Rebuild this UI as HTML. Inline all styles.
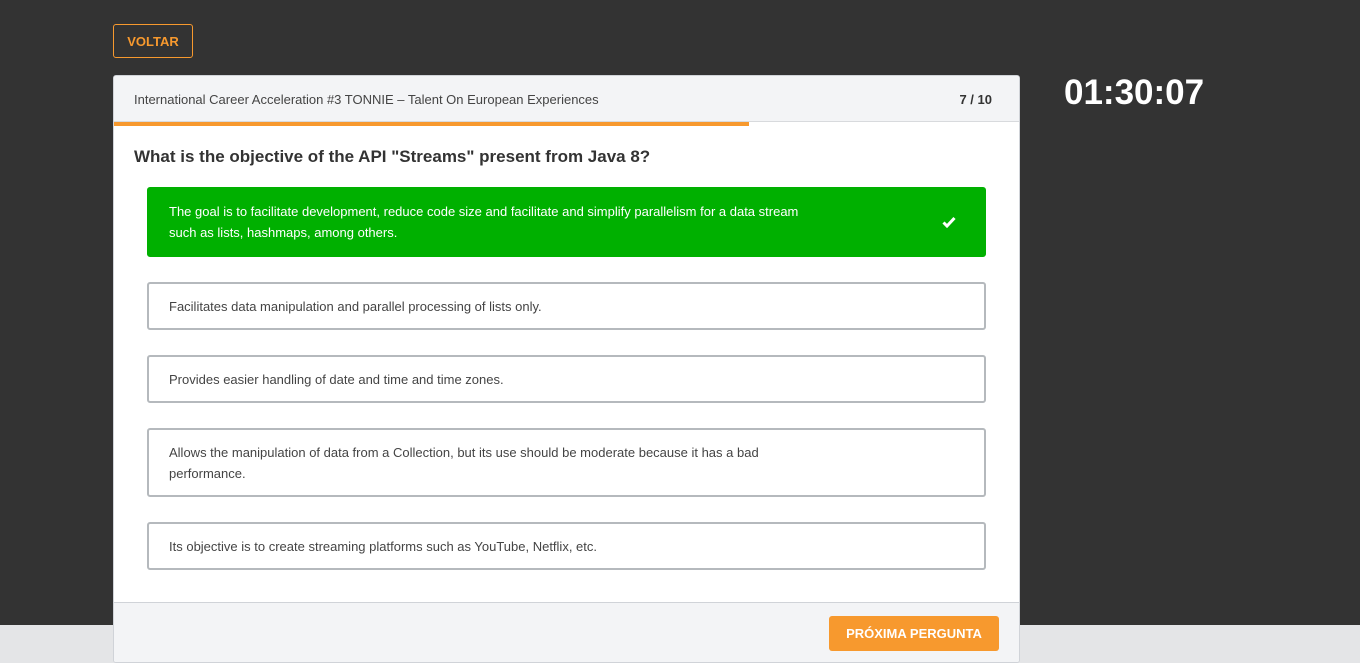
<!DOCTYPE html>
<html><head><style>
*{box-sizing:border-box;margin:0;padding:0}
body{width:1360px;height:663px;position:relative;background:#e4e5e7;font-family:"Liberation Sans",sans-serif;overflow:hidden}
.dark{position:absolute;left:0;top:0;width:1360px;height:625px;background:#333}
.voltar{position:absolute;left:113px;top:24px;width:80px;height:34px;border:1px solid #f7992e;border-radius:3px;color:#f7992e;font-weight:bold;font-size:13px;text-align:center;line-height:34px}
.timer{position:absolute;left:1064px;top:73px;color:#fff;font-weight:bold;font-size:35px}
.card{position:absolute;left:113px;top:75px;width:907px;height:588px;background:#fff;border:1px solid #d0d3d8;border-radius:3px;overflow:hidden}
.hd{height:46px;background:#f3f4f6;border-bottom:1px solid #d8dadd;position:relative;font-size:13px;color:#444}
.hd .t{position:absolute;left:20px;top:16px}
.hd .n{position:absolute;right:27px;top:16px;font-weight:bold;color:#333}
.bar{position:absolute;left:0;top:46px;width:635px;height:4px;background:#f7992e}
.q{position:absolute;left:20px;top:71px;font-size:17px;font-weight:bold;color:#333}
.opt{position:absolute;left:33px;width:839px;border:2px solid #b5b9bd;border-radius:3px;font-size:13px;color:#444;padding:0 20px;display:flex;align-items:center;line-height:21px}
.ok{background:#00b000;border-color:#00b000;color:#fff}
.ft{position:absolute;left:0;top:526px;width:907px;height:62px;background:#f3f4f6;border-top:1px solid #d0d3d8}
.btn{position:absolute;left:715px;top:13px;width:170px;height:35px;background:#f7992e;border-radius:3px;color:#fff;font-weight:bold;font-size:13px;text-align:center;line-height:35px}
</style></head><body>
<div class="dark"></div>
<div class="voltar">VOLTAR</div>
<div class="timer">01:30:07</div>
<div class="card">
<div class="hd"><span class="t">International Career Acceleration #3 TONNIE – Talent On European Experiences</span><span class="n">7 / 10</span></div>
<div class="bar"></div>
<div class="q">What is the objective of the API "Streams" present from Java 8?</div>
<div class="opt ok" style="top:111px;height:70px"><span style="width:640px">The goal is to facilitate development, reduce code size and facilitate and simplify parallelism for a data stream such as lists, hashmaps, among others.</span>
<svg style="position:absolute;left:793px;top:27px" width="14" height="12" viewBox="0 0 14 12"><path d="M1.5 6.5 L5 10 L12.5 2" stroke="#fff" stroke-width="3" fill="none"/></svg></div>
<div class="opt" style="top:206px;height:48px">Facilitates data manipulation and parallel processing of lists only.</div>
<div class="opt" style="top:279px;height:48px">Provides easier handling of date and time and time zones.</div>
<div class="opt" style="top:352px;height:69px"><span style="width:640px">Allows the manipulation of data from a Collection, but its use should be moderate because it has a bad performance.</span></div>
<div class="opt" style="top:446px;height:48px">Its objective is to create streaming platforms such as YouTube, Netflix, etc.</div>
<div class="ft"><div class="btn">PRÓXIMA PERGUNTA</div></div>
</div>
</body></html>
